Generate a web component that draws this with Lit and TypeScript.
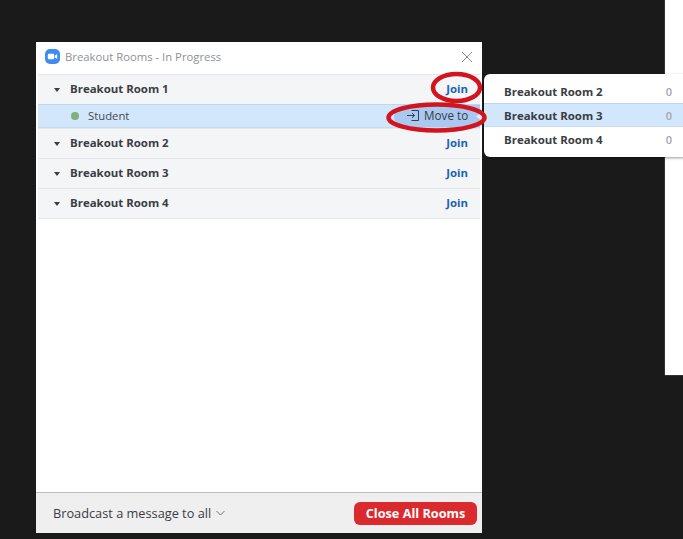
import { LitElement, html, css, svg } from "lit";
import { customElement } from "lit/decorators.js";

@customElement("app-root")
export class AppRoot extends LitElement {
  static styles = css`
    :host {
      display: block;
      position: relative;
      width: 683px;
      height: 539px;
      overflow: hidden;
      background: #1a1a1a;
      font-family: "Open Sans", "Noto Sans", sans-serif;
      color: #3a3d45;
    }
    .backwin {
      position: absolute;
      left: 665px;
      top: 0;
      width: 18px;
      height: 375px;
      background: #fff;
      box-shadow: -1px 0 0 #333, 0 1px 0 #333;
    }
    .window {
      position: absolute;
      left: 36px;
      top: 42px;
      width: 446px;
      height: 491px;
      background: #fff;
      display: flex;
      flex-direction: column;
    }
    .title {
      height: 32px;
      flex: none;
      display: flex;
      align-items: center;
      padding: 0 9px 3px;
      gap: 5px;
      font-size: 11.3px;
      color: #8f9196;
      box-sizing: border-box;
    }
    .title .t { flex: 1; margin-top: -1px; }
    .list { flex: 1; padding-left: 2px; padding-right: 2px; }
    .room {
      height: 30px;
      box-sizing: border-box;
      background: #f4f5f7;
      border-top: 1px solid #e6e7ea;
      display: flex;
      align-items: center;
      padding: 0 12px 2px 16px;
      font-size: 11.45px;
      font-weight: 700;
      color: #3a3d45;
    }
    .caret {
      width: 0;
      height: 0;
      border-left: 3px solid transparent;
      border-right: 3px solid transparent;
      border-top: 4px solid #3a3d45;
      margin: 2px 10px 0 0;
    }
    .room .n { flex: 1; }
    .join { color: #1c63b0; font-size: 11.4px; font-weight: 700; }
    .room-end { height: 1px; background: #e6e7ea; }
    .student {
      height: 24px;
      box-sizing: border-box;
      background: #d2e7fb;
      border-top: 1px solid #bfd7ee;
      border-bottom: 1px solid #c6dcf2;
      display: flex;
      align-items: center;
      padding-left: 33px;
      font-size: 11.3px;
      color: #444a55;
    }
    .student .n { flex: 1; margin-top: -2px; }
    .dot {
      width: 8px;
      height: 8px;
      border-radius: 50%;
      background: #7fb07c;
      margin: -1px 9px 0 0;
    }
    .move {
      height: 22px;
      width: 86px;
      box-sizing: border-box;
      background: #a9c9f0;
      display: flex;
      align-items: center;
      gap: 5px;
      padding: 0 0 2px 13px;
      font-size: 11.7px;
      color: #3a3d45;
      border-radius: 12px 0 0 12px;
    }
    .footer {
      height: 41px;
      flex: none;
      box-sizing: border-box;
      background: #efefef;
      border-top: 1px solid #bdbdbd;
      display: flex;
      align-items: center;
      justify-content: space-between;
      padding: 0 5px 0 17px;
    }
    .broadcast {
      display: flex;
      align-items: center;
      gap: 5px;
      font-size: 12.75px;
      color: #3a3d45;
    }
    .close {
      width: 123px;
      height: 23px;
      margin-top: 1px;
      border-radius: 6px;
      background: #db2a2e;
      color: #fff;
      font-size: 12.7px;
      font-weight: 700;
      padding-bottom: 2px;
      box-sizing: border-box;
      display: flex;
      align-items: center;
      justify-content: center;
    }
    .menu {
      position: absolute;
      left: 484px;
      top: 74px;
      width: 199px;
      height: 83px;
      box-sizing: border-box;
      background: #fff;
      border-radius: 6px 0 0 6px;
      padding: 5px 0;
      box-shadow: 1px 1px 3px rgba(0, 0, 0, 0.4);
    }
    .item {
      height: 24px;
      box-sizing: border-box;
      display: flex;
      align-items: center;
      justify-content: space-between;
      padding: 0 11px 0 20px;
      font-size: 11.45px;
      font-weight: 700;
      color: #3a3d45;
    }
    .item.on {
      background: #d2e7fb;
      border-top: 1px solid #bfd7ee;
      border-bottom: 1px solid #c6dcf2;
    }
    .count { color: #a3a5a9; font-size: 11px; font-weight: 600; }
    .ovals {
      position: absolute;
      left: 0;
      top: 0;
      pointer-events: none;
    }
  `;

  render() {
    const rooms = ["Breakout Room 2", "Breakout Room 3", "Breakout Room 4"];
    return html`
      <div class="backwin"></div>
      <div class="window">
        <div class="title">
          <svg width="15" height="15" viewBox="0 0 15 15">
            <rect width="15" height="15" rx="5" fill="#3f8cf0" />
            <rect x="2.8" y="4.8" width="6.4" height="5.4" rx="1.2" fill="#fff" />
            <path d="M9.8 6.8 12.2 5v5l-2.4-1.8z" fill="#fff" />
          </svg>
          <span class="t">Breakout Rooms - In Progress</span>
          <svg width="12" height="12" viewBox="0 0 12 12">
            <path d="M1 1l10 10M11 1 1 11" stroke="#8a8c90" stroke-width="1" fill="none" />
          </svg>
        </div>
        <div class="list">
          <div class="room"><i class="caret"></i><span class="n">Breakout Room 1</span><span class="join">Join</span></div>
          <div class="student">
            <i class="dot"></i><span class="n">Student</span>
            <div class="move">
              <svg width="12" height="11" viewBox="0 0 12 11">
                <path d="M0 5.500h7.500M5 3l2.500 2.500L5 8M4.500 .500h7v10h-7" stroke="#3a3d45" stroke-width="1" fill="none" />
              </svg>
              <span>Move to</span>
            </div>
          </div>
          ${rooms.map(
            (r) => html`<div class="room"><i class="caret"></i><span class="n">${r}</span><span class="join">Join</span></div>`
          )}
          <div class="room-end"></div>
        </div>
        <div class="footer">
          <div class="broadcast">
            <span>Broadcast a message to all</span>
            <svg width="9" height="6" viewBox="0 0 9 6"><path d="M.5 1l4 4 4-4" stroke="#777" stroke-width="1" fill="none" /></svg>
          </div>
          <div class="close">Close All Rooms</div>
        </div>
      </div>
      <div class="menu">
        ${rooms.map(
          (r, i) => html`<div class="item ${i === 1 ? "on" : ""}"><span>${r}</span><span class="count">0</span></div>`
        )}
      </div>
      <svg class="ovals" width="683" height="539" viewBox="0 0 683 539">
        ${svg`
          <path d="M476 116.500l7-5v10z" fill="#e8eef5" />
          <ellipse cx="456.500" cy="87.500" rx="23.500" ry="13.500" fill="none" stroke="#d2141f" stroke-width="4.500" />
          <ellipse cx="436.500" cy="117.500" rx="48" ry="13" fill="none" stroke="#d2141f" stroke-width="4.500" />
        `}
      </svg>
    `;
  }
}
